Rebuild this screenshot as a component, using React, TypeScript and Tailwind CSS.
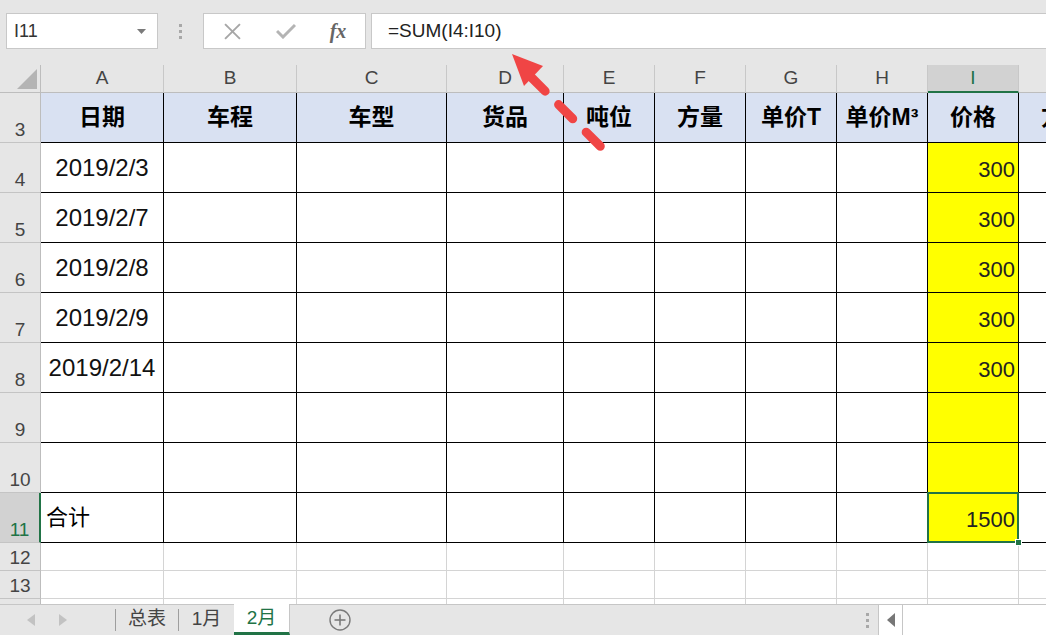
import React from "react";

const FONT = { fontFamily: '"Liberation Sans", "Noto Sans CJK SC", sans-serif' };

const cols = [
  { w: "w-[123px]", l: "A" },
  { w: "w-[133px]", l: "B" },
  { w: "w-[150px]", l: "C" },
  { w: "w-[117px]", l: "D" },
  { w: "w-[91px]", l: "E" },
  { w: "w-[91px]", l: "F" },
  { w: "w-[91px]", l: "G" },
  { w: "w-[91px]", l: "H" },
  { w: "w-[91px]", l: "I" },
  { w: "w-[91px]", l: "J" },
];

const headers = ["日期", "车程", "车型", "货品", "吨位", "方量", "单价T", "单价M³", "价格", "方式"];

const dataRows: { n: number; a: string; i: string }[] = [
  { n: 4, a: "2019/2/3", i: "300" },
  { n: 5, a: "2019/2/7", i: "300" },
  { n: 6, a: "2019/2/8", i: "300" },
  { n: 7, a: "2019/2/9", i: "300" },
  { n: 8, a: "2019/2/14", i: "300" },
  { n: 9, a: "", i: "" },
  { n: 10, a: "", i: "" },
];

function RowHeader({ n, active, h }: { n: number; active?: boolean; h: string }) {
  return (
    <div
      className={
        "shrink-0 w-[41px] flex items-end justify-center text-[19px] leading-[20px] pb-[2px] border-b border-[#c4c4c4] " +
        h +
        " " +
        (active
          ? "bg-[#d2d2d2] text-[#217346] border-r-2 border-r-[#217346]"
          : "bg-[#e6e6e6] text-[#444] border-r border-r-[#bdbdbd]")
      }
    >
      {n}
    </div>
  );
}

export default function App() {
  return (
    <div className="relative w-[1046px] h-[635px] overflow-hidden bg-white flex flex-col" style={FONT}>
      {/* top formula bar */}
      <div className="shrink-0 h-[65px] bg-[#e6e6e6] flex items-start pt-[13px]">
        <div className="ml-[6px] w-[152px] h-[36px] bg-white border border-[#c8c8c8] flex items-center justify-between pl-[7px] pr-[11px] text-[18px] text-[#333]">
          <span>I11</span>
          <svg width="9" height="5" viewBox="0 0 9 5">
            <polygon points="0,0 9,0 4.5,5" fill="#7a7a7a" />
          </svg>
        </div>
        <div className="w-[45px] h-[36px] flex flex-col items-center justify-center gap-[3px]">
          <div className="w-[3px] h-[3px] bg-[#a8a8a8]" />
          <div className="w-[3px] h-[3px] bg-[#a8a8a8]" />
          <div className="w-[3px] h-[3px] bg-[#a8a8a8]" />
        </div>
        <div className="w-[163px] h-[36px] bg-white border border-[#c8c8c8] flex items-center">
          <div className="w-[56px] flex justify-center">
            <svg width="17" height="17" viewBox="0 0 16 16">
              <line x1="1" y1="1" x2="15" y2="15" stroke="#a6a6a6" strokeWidth="1.8" />
              <line x1="15" y1="1" x2="1" y2="15" stroke="#a6a6a6" strokeWidth="1.8" />
            </svg>
          </div>
          <div className="w-[52px] flex justify-center">
            <svg width="20" height="16" viewBox="0 0 20 16">
              <polyline points="1,8 7,14 19,2" fill="none" stroke="#b4b4b4" strokeWidth="3" />
            </svg>
          </div>
          <div
            className="w-[52px] flex justify-center text-[20px] italic text-[#666] font-bold"
            style={{ fontFamily: '"Liberation Serif", serif' }}
          >
            fx
          </div>
        </div>
        <div className="ml-[5px] flex-1 h-[36px] bg-white border border-r-0 border-[#c8c8c8] flex items-center pl-[16px] text-[19px] text-[#222]">
          =SUM(I4:I10)
        </div>
      </div>

      {/* grid */}
      <div className="flex-1 overflow-hidden flex flex-col">
        {/* column header row */}
        <div className="shrink-0 h-[28px] flex">
          <div className="shrink-0 w-[41px] bg-[#e6e6e6] border-r border-b border-[#bdbdbd] flex items-end justify-end pr-[3px] pb-[3px]">
            <svg width="20" height="20" viewBox="0 0 20 20">
              <polygon points="20,0 20,20 0,20" fill="#b4b4b4" />
            </svg>
          </div>
          {cols.map((c) => (
            <div
              key={c.l}
              className={
                "shrink-0 flex items-center justify-center text-[19px] border-r border-r-[#c8c8c8] " +
                c.w +
                " " +
                (c.l === "I"
                  ? "bg-[#d2d2d2] text-[#217346] border-b-2 border-b-[#217346]"
                  : "bg-[#e6e6e6] text-[#444] border-b border-b-[#bdbdbd]")
              }
            >
              {c.l}
            </div>
          ))}
        </div>

        {/* row 3 header */}
        <div className="shrink-0 h-[50px] flex">
          <RowHeader n={3} h="h-[50px]" />
          {cols.map((c, idx) => (
            <div
              key={c.l}
              className={
                "shrink-0 h-[50px] bg-[#d9e1f2] border-r border-b border-black flex items-center justify-center font-bold text-[23px] text-black whitespace-nowrap overflow-hidden " +
                c.w
              }
            >
              {headers[idx]}
            </div>
          ))}
        </div>

        {dataRows.map((r) => (
          <div key={r.n} className="shrink-0 h-[50px] flex">
            <RowHeader n={r.n} h="h-[50px]" />
            {cols.map((c) => {
              if (c.l === "A")
                return (
                  <div
                    key={c.l}
                    className={"shrink-0 h-[50px] border-r border-b border-black flex items-center justify-center text-[24px] text-[#111] " + c.w}
                  >
                    {r.a}
                  </div>
                );
              if (c.l === "I")
                return (
                  <div
                    key={c.l}
                    className={"shrink-0 h-[50px] bg-[#ffff00] border-r border-b border-black flex items-center justify-end pr-[3px] pt-[3px] text-[22px] text-[#222] " + c.w}
                  >
                    {r.i}
                  </div>
                );
              return <div key={c.l} className={"shrink-0 h-[50px] border-r border-b border-black " + c.w} />;
            })}
          </div>
        ))}

        {/* row 11 */}
        <div className="shrink-0 h-[50px] flex">
          <RowHeader n={11} active h="h-[50px]" />
          {cols.map((c) => {
            if (c.l === "A")
              return (
                <div
                  key={c.l}
                  className={"shrink-0 h-[50px] border-r border-b border-black flex items-center justify-start pl-[5px] text-[22px] text-black " + c.w}
                >
                  合计
                </div>
              );
            if (c.l === "I")
              return (
                <div
                  key={c.l}
                  className={"relative shrink-0 h-[50px] bg-[#ffff00] border-r border-b border-black flex items-center justify-end pr-[3px] pt-[3px] text-[22px] text-[#222] " + c.w}
                >
                  1500
                  <div className="absolute left-[-1px] top-[-1px] right-[-1px] bottom-[-1px] border-2 border-[#217346]" />
                  <div className="absolute right-[-4px] bottom-[-4px] w-[7px] h-[7px] bg-[#217346] border border-white" />
                </div>
              );
            return <div key={c.l} className={"shrink-0 h-[50px] border-r border-b border-black " + c.w} />;
          })}
        </div>

        {[12, 13, 14].map((n) => (
          <div key={n} className="shrink-0 h-[28px] flex">
            <RowHeader n={n} h="h-[28px]" />
            {cols.map((c) => (
              <div key={c.l} className={"shrink-0 h-[28px] border-r border-b border-[#d4d4d4] " + c.w} />
            ))}
          </div>
        ))}
      </div>

      {/* sheet tabs */}
      <div className="shrink-0 h-[31px] bg-[#e6e6e6] border-t border-[#c6c6c6] flex items-stretch text-[19px]">
        <div className="w-[115px] flex items-center pl-[27px] gap-[24px]">
          <svg width="8" height="12" viewBox="0 0 8 12">
            <polygon points="8,0 8,12 0,6" fill="#c2c2c2" />
          </svg>
          <svg width="8" height="12" viewBox="0 0 8 12">
            <polygon points="0,0 0,12 8,6" fill="#c2c2c2" />
          </svg>
        </div>
        <div className="w-px my-[4px] bg-[#9e9e9e]" />
        <div className="w-[62px] flex items-center justify-center text-[#444] pb-[2px]">总表</div>
        <div className="w-px my-[4px] bg-[#9e9e9e]" />
        <div className="w-[55px] flex items-center justify-center text-[#444] pb-[2px]">1月</div>
        <div className="w-[56px] -mt-px bg-white border-r border-[#c6c6c6] border-b-[3px] border-b-[#217346] flex items-center justify-center text-[#217346]">
          2月
        </div>
        <div className="w-[568px] flex items-center pl-[39px]">
          <svg width="22" height="22" viewBox="0 0 22 22">
            <circle cx="11" cy="11" r="10" fill="none" stroke="#7a7a7a" strokeWidth="1.4" />
            <line x1="11" y1="5.5" x2="11" y2="16.5" stroke="#7a7a7a" strokeWidth="1.6" />
            <line x1="5.5" y1="11" x2="16.5" y2="11" stroke="#7a7a7a" strokeWidth="1.6" />
          </svg>
        </div>
        <div className="w-[20px] flex flex-col items-center justify-center gap-[3px] pr-[2px]">
          <div className="w-[3px] h-[3px] bg-[#a8a8a8]" />
          <div className="w-[3px] h-[3px] bg-[#a8a8a8]" />
          <div className="w-[3px] h-[3px] bg-[#a8a8a8]" />
        </div>
        <div className="flex-1 bg-white border-l border-[#c6c6c6] flex items-stretch">
          <div className="w-[24px] border-r border-[#c6c6c6] flex items-center justify-center">
            <svg width="8" height="14" viewBox="0 0 8 14">
              <polygon points="8,0 8,14 0,7" fill="#777" />
            </svg>
          </div>
        </div>
      </div>

      {/* red arrow annotation */}
      <svg className="absolute left-0 top-0 pointer-events-none" width="1046" height="635">
        <line
          x1="531"
          y1="77"
          x2="601"
          y2="147"
          stroke="#f04545"
          strokeWidth="9"
          strokeLinecap="round"
          strokeDasharray="20 19"
        />
        <polygon points="512,54 543,66 524,86" fill="#f04545" />
      </svg>
    </div>
  );
}
